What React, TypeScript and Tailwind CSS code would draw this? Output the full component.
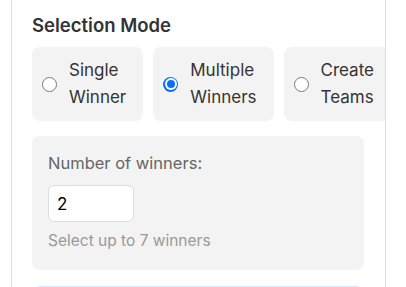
import { useState } from 'react';

const MODES = [
  { id: 'single', label: 'Single Winner' },
  { id: 'multiple', label: 'Multiple Winners' },
  { id: 'teams', label: 'Create Teams' },
];

function Radio({ checked }: { checked: boolean }) {
  if (checked) {
    return (
      <span className="flex h-[15px] w-[15px] shrink-0 items-center justify-center rounded-full bg-[#0a6cff]">
        <span className="flex h-[12px] w-[12px] items-center justify-center rounded-full bg-white">
          <span className="h-[8px] w-[8px] rounded-full bg-[#0a6cff]" />
        </span>
      </span>
    );
  }
  return <span className="h-[15px] w-[15px] shrink-0 rounded-full border border-[#7a7a7a] bg-white" />;
}

export default function App() {
  const [mode, setMode] = useState('multiple');
  const [count, setCount] = useState('2');

  return (
    <div className="h-[287px] w-[406px] overflow-hidden bg-white font-['Inter','Liberation_Sans',sans-serif]">
      <div className="ml-[11px] h-full w-[375px] overflow-hidden border-x border-[#dcdcdc] pl-5 pt-[13px]">
        <h2 className="text-[18.5px] font-semibold leading-[24px] text-[#333]">Selection Mode</h2>

        <div className="mt-[10px] flex gap-[10px]">
          {MODES.map((m) => (
            <button
              key={m.id}
              type="button"
              onClick={() => setMode(m.id)}
              className="flex min-w-min shrink-0 items-center gap-3 rounded-lg bg-[#f3f3f3] py-[10px] pl-[10px] pr-[17px] text-left"
            >
              <Radio checked={mode === m.id} />
              <span className="w-min text-[17px] leading-[27px] text-[#333]">{m.label}</span>
            </button>
          ))}
        </div>

        <div className="mt-[15px] w-[332px] rounded-lg bg-[#f3f3f3] px-4 pb-[18px] pt-[15px]">
          <label className="block text-[16.5px] leading-[24px] text-[#666]">Number of winners:</label>
          <input
            value={count}
            onChange={(e) => setCount(e.target.value)}
            className="mt-[10px] h-[37px] w-[86px] rounded-md border border-[#dddddd] bg-white px-2 text-[17px] text-black outline-none"
          />
          <p className="mt-2 text-[15.5px] leading-[22px] text-[#999]">Select up to 7 winners</p>
        </div>

        <div className="mt-4 h-10 w-[332px] rounded-lg border border-[#dbe9ff] border-l-4 border-l-[#f0b040] bg-[#eef5ff]" />
      </div>
    </div>
  );
}
